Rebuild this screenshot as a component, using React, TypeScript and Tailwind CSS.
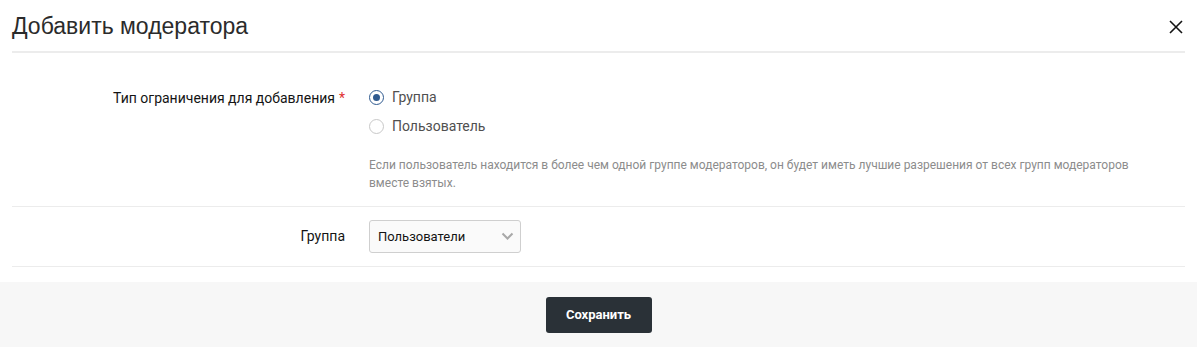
import { useState } from "react";

export default function App() {
  const [type, setType] = useState<"group" | "user">("group");

  const radio = (value: "group" | "user", label: string) => {
    const on = type === value;
    return (
      <label className="flex h-[29px] cursor-pointer items-center gap-[8px]" onClick={() => setType(value)}>
        <span
          className={`flex h-[15px] w-[15px] items-center justify-center rounded-full border bg-white ${
            on ? "border-[#2f5a8f]" : "border-[#c8c8c8]"
          }`}
        >
          {on && <span className="h-[7px] w-[7px] rounded-full bg-[#2f5a8f]" />}
        </span>
        <span className="text-[14px] text-[#505050]">{label}</span>
      </label>
    );
  };

  return (
    <div className="min-h-[347px] w-full bg-white font-['Roboto',sans-serif] text-[#141414]">
      <div className="mx-[12px] flex h-[53px] items-center justify-between border-b-2 border-[#ececec] pt-[2px]">
        <h1 className="font-['Liberation_Sans',Arial,sans-serif] text-[23px] font-normal text-[#2b2b2b]">Добавить модератора</h1>
        <button className="mr-[1px] text-[#141414]" aria-label="Закрыть">
          <svg width="16" height="16" viewBox="0 0 16 16" fill="none" stroke="currentColor" strokeWidth="1.6">
            <path d="M2 2 L14 14 M14 2 L2 14" />
          </svg>
        </button>
      </div>

      <div className="mx-[12px]">
        <div className="flex border-b border-[#ececec] pt-[35px] pb-[14px]">
          <div className="w-[345px] shrink-0 pr-[12px] text-right text-[14px] leading-[20px]">
            Тип ограничения для добавления
            <span className="ml-[4px] text-[#e03030]">*</span>
          </div>
          <div className="pl-[12px]">
            <div className="-mt-[5px]">
              {radio("group", "Группа")}
              {radio("user", "Пользователь")}
            </div>
            <p className="mt-[15px] text-[12px] leading-[18px] text-[#8c8c8c]">
              Если пользователь находится в более чем одной группе модераторов, он будет иметь лучшие разрешения от всех групп модераторов
              <br />
              вместе взятых.
            </p>
          </div>
        </div>

        <div className="flex items-center border-b border-[#ececec] py-[13px]">
          <div className="w-[345px] shrink-0 pr-[12px] text-right text-[14px]">Группа</div>
          <div className="pl-[12px]">
            <div className="relative h-[33px] w-[152px]">
              <select className="h-full w-full appearance-none rounded-[3px] border border-[#cfcfcf] bg-[#fafafa] pl-[8px] pt-[1px] text-[13px] text-[#141414] outline-none">
                <option>Пользователи</option>
              </select>
              <svg
                className="pointer-events-none absolute right-[7px] top-[12px]"
                width="13"
                height="9"
                viewBox="0 0 13 9"
                fill="none"
                stroke="#a8a8a8"
                strokeWidth="2"
              >
                <path d="M1.5 1.5 L6.5 6.5 L11.5 1.5" />
              </svg>
            </div>
          </div>
        </div>
      </div>

      <div className="mt-[15px] flex h-[65px] items-center justify-center bg-[#f7f7f7]">
        <button className="h-[36px] w-[106px] rounded-[3px] bg-[#2a3137] text-[13px] font-bold text-white">Сохранить</button>
      </div>
    </div>
  );
}
